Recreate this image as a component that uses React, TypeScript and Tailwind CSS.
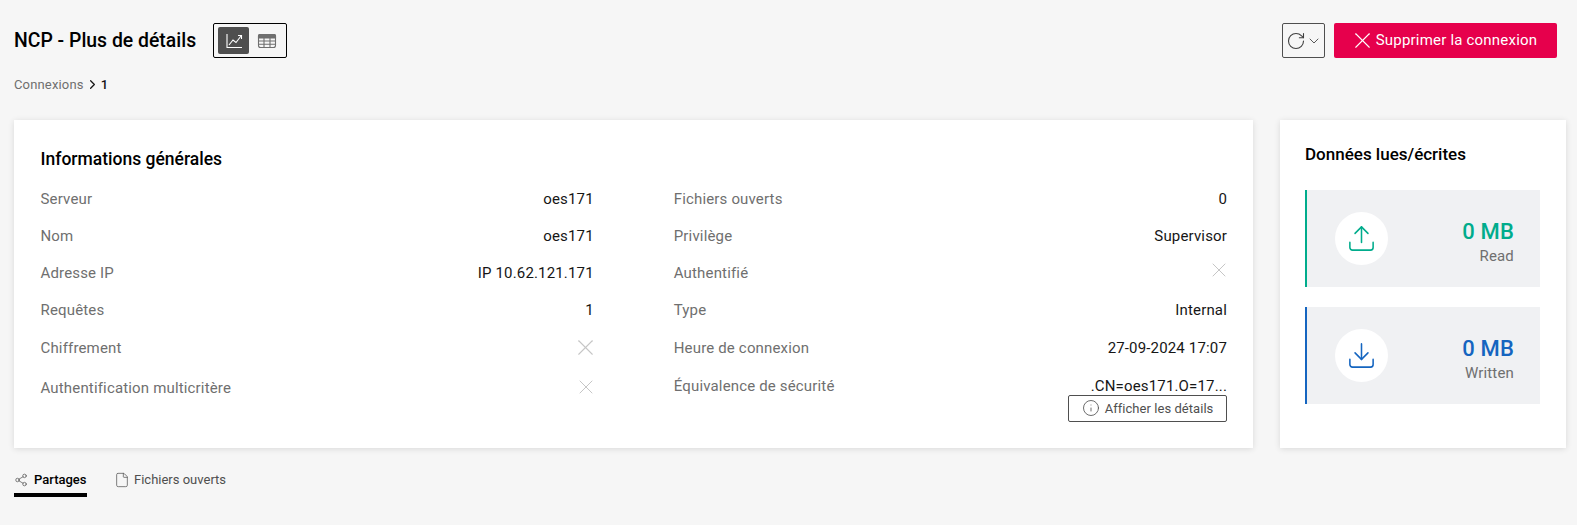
import { ReactNode } from 'react';
import { X, ChevronDown, ChevronRight, RotateCw, Info, Upload, Download, Share2, File } from 'lucide-react';

function ChartIcon() {
  return (
    <svg width="18" height="18" viewBox="0 0 18 18" fill="none" stroke="currentColor" strokeWidth="1.1">
      <path d="M2 2v13.5h15" />
      <path d="M4 13l4-5 3 2.5 5-6.5" />
      <path d="M13 3.5h3.5V7" />
    </svg>
  );
}

function TableIcon() {
  return (
    <svg width="20" height="16" viewBox="0 0 20 16" fill="none" stroke="currentColor" strokeWidth="1.1">
      <rect x="1.5" y="1.5" width="17" height="13" rx="2" />
      <path d="M1.5 2.5a1 1 0 0 1 1-1h15a1 1 0 0 1 1 1v2.5h-17z" fill="currentColor" />
      <path d="M1.5 8h17M1.5 11.2h17M7 5v9.5M13 5v9.5" />
    </svg>
  );
}

function Row({ label, children, className = 'h-[37.3px]' }: { label: string; children: ReactNode; className?: string }) {
  return (
    <div className={`flex items-start justify-between leading-[22px] ${className}`}>
      <span className="text-[#6f6f6f]">{label}</span>
      <span className="text-[#161616]">{children}</span>
    </div>
  );
}

function StatCard({ value, label, border, text, icon }: { value: string; label: string; border: string; text: string; icon: ReactNode }) {
  return (
    <div className={`flex h-[97px] items-center justify-between border-l-2 bg-[#f0f1f3] pl-[28px] pr-[26px] ${border}`}>
      <div className={`flex h-[53px] w-[53px] items-center justify-center rounded-full bg-white ${text}`}>{icon}</div>
      <div className="pt-[7px] text-right">
        <div className={`text-[22px] leading-[26px] font-medium ${text}`}>{value}</div>
        <div className="mt-[1px] text-[15px] leading-[20px] tracking-[0.16px] text-[#6f6f6f]">{label}</div>
      </div>
    </div>
  );
}

export default function App() {
  return (
    <div className="h-[525px] w-[1577px] overflow-hidden bg-[#f6f6f6] pl-[14px] pr-[11px] pt-[23px] font-['Roboto',sans-serif] text-[15px] tracking-[0.16px]">
      {/* Header */}
      <div className="flex h-[35px] items-center justify-between pr-[9px]">
        <div className="flex items-center">
          <h1 className="text-[19.4px] leading-[35px] font-medium tracking-normal text-black">NCP - Plus de détails</h1>
          <div className="ml-[17px] flex h-[35px] w-[74px] items-center gap-[4px] rounded-[2px] border border-black px-[4px]">
            <div className="flex h-[27px] w-[31px] items-center justify-center rounded-[2px] bg-[#4f4f4f] text-white">
              <ChartIcon />
            </div>
            <div className="flex h-[27px] w-[27px] items-center justify-center text-[#6f6f6f]">
              <TableIcon />
            </div>
          </div>
        </div>
        <div className="flex items-center gap-[9px]">
          <button className="flex h-[35px] w-[43px] items-center justify-center rounded-[2px] border border-[#4f4f4f] text-[#3f3f3f]">
            <RotateCw size={20} strokeWidth={1.3} />
            <ChevronDown size={16} strokeWidth={1.3} />
          </button>
          <button className="flex h-[35px] w-[223px] items-center justify-center rounded-[2px] bg-[#e6004c] pr-[5px] text-white">
            <X size={27} strokeWidth={1} />
            <span className="text-[15px] tracking-[0.2px]">Supprimer la connexion</span>
          </button>
        </div>
      </div>

      {/* Breadcrumb */}
      <div className="mt-[19px] flex h-[15px] items-center text-[13px] text-[#6f6f6f]">
        <span>Connexions</span>
        <ChevronRight size={15} strokeWidth={2} className="mx-[1px] text-[#161616]" />
        <span className="font-medium text-[#161616]">1</span>
      </div>

      {/* Cards */}
      <div className="mt-[28px] flex gap-[27px]">
        <section className="h-[328px] w-[1239px] bg-white pl-[26.5px] pr-[26px] pt-[28px] shadow-[0_1px_6px_rgba(0,0,0,0.12)]">
          <h2 className="text-[17.5px] leading-[22px] font-medium tracking-normal text-black">Informations générales</h2>
          <div className="mt-[17.5px] grid grid-cols-2 gap-x-[80px]">
            <div>
              <Row label="Serveur">oes171</Row>
              <Row label="Nom">oes171</Row>
              <Row label="Adresse IP">IP 10.62.121.171</Row>
              <Row label="Requêtes">1</Row>
              <Row label="Chiffrement" className="h-[40px]">
                <X size={27} strokeWidth={1} className="mr-[-5px] mt-[-3px] text-[#c6c6c6]" />
              </Row>
              <Row label="Authentification multicritère">
                <X size={24} strokeWidth={1} className="mr-[-4px] mt-[-2px] text-[#c6c6c6]" />
              </Row>
            </div>
            <div>
              <Row label="Fichiers ouverts">0</Row>
              <Row label="Privilège">Supervisor</Row>
              <Row label="Authentifié">
                <X size={24} strokeWidth={1} className="mr-[-4px] mt-[-4px] text-[#c6c6c6]" />
              </Row>
              <Row label="Type">Internal</Row>
              <Row label="Heure de connexion">27-09-2024 17:07</Row>
              <div className="flex items-start justify-between">
                <span className="mt-[1px] leading-[22px] text-[#6f6f6f]">Équivalence de sécurité</span>
                <div className="flex flex-col items-end">
                  <span className="mt-[4px] leading-[17px] text-[#161616]">.CN=oes171.O=17...</span>
                  <button className="flex h-[27px] w-[159px] items-center justify-center gap-[5px] rounded-[2px] border border-[#4f4f4f] text-[13px] tracking-[0.05px] text-[#4f4f4f]">
                    <Info size={18} strokeWidth={1.1} />
                    Afficher les détails
                  </button>
                </div>
              </div>
            </div>
          </div>
        </section>

        <section className="h-[328px] w-[286px] bg-white pl-[25px] pr-[26px] pt-[23px] shadow-[0_1px_6px_rgba(0,0,0,0.12)]">
          <h2 className="text-[17px] leading-[22px] font-medium tracking-normal text-black">Données lues/écrites</h2>
          <div className="mt-[25px] flex flex-col gap-[20px]">
            <StatCard value="0 MB" label="Read" border="border-[#00ac8c]" text="text-[#00ac8c]" icon={<Upload size={31} strokeWidth={1.2} />} />
            <StatCard value="0 MB" label="Written" border="border-[#1565c0]" text="text-[#1565c0]" icon={<Download size={31} strokeWidth={1.2} />} />
          </div>
        </section>
      </div>

      {/* Tabs */}
      <div className="mt-[15px] flex gap-[27px] text-[13px] tracking-normal">
        <div className="flex h-[34px] flex-col justify-between">
          <div className="flex items-center gap-[6px] pt-[7px] font-medium text-black">
            <Share2 size={14} strokeWidth={1.1} className="text-[#3f3f3f]" />
            <span>Partages</span>
          </div>
          <div className="h-[4px] w-[73px] bg-black" />
        </div>
        <div className="flex items-center gap-[4px] self-start pt-[7px] text-[#4f4f4f]">
          <File size={16} strokeWidth={1.1} />
          <span>Fichiers ouverts</span>
        </div>
      </div>
    </div>
  );
}
